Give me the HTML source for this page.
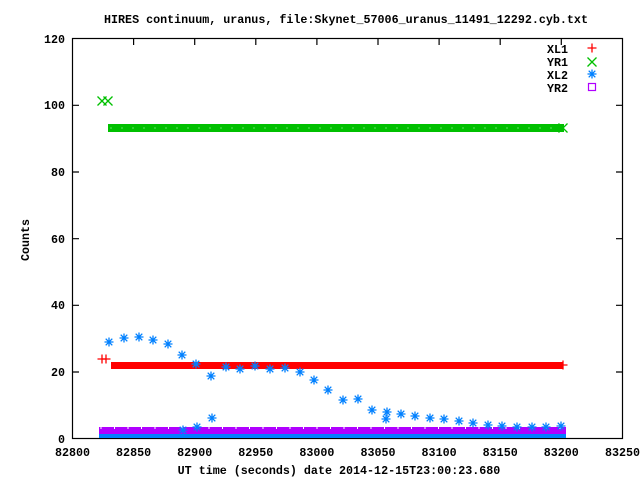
<!DOCTYPE html>
<html><head><meta charset="utf-8"><style>
html,body{margin:0;padding:0;background:#fff;}
svg{display:block;}
text{font-family:"Liberation Mono",monospace;font-weight:bold;font-size:11.7px;fill:#000;}
</style></head><body>
<svg width="640" height="480" viewBox="0 0 640 480" xmlns="http://www.w3.org/2000/svg">
<defs>
<g id="st" stroke="#0080ff" stroke-width="1.3" fill="none">
<path d="M-4.5 0H4.5M0 -4.5V4.5M-3.3 -3.3L3.3 3.3M-3.3 3.3L3.3 -3.3"/>
</g>
<g id="xm" stroke="#00c000" stroke-width="1.3"><path d="M-4.5 -4.5L4.5 4.5M-4.5 4.5L4.5 -4.5"/></g>
<g id="pl" stroke="#ff0000" stroke-width="1.3"><path d="M-4.5 0H4.5M0 -4.5V4.5"/></g>
<pattern id="pp" x="0" y="0" width="13.5" height="8" patternUnits="userSpaceOnUse">
<rect width="13.5" height="8" fill="#b000ff"/><rect x="6" y="2" width="1" height="3" fill="#fff"/>
</pattern>
</defs>
<text x="346" y="23" text-anchor="middle">HIRES continuum, uranus, file:Skynet_57006_uranus_11491_12292.cyb.txt</text>
<!-- frame -->
<rect x="72.5" y="38.5" width="550" height="400" fill="none" stroke="#000" stroke-width="1.2"/>
<g stroke="#000" stroke-width="1.2">
<path d="M72.5 372H79M72.5 305.3H79M72.5 238.7H79M72.5 172H79M72.5 105.3H79M622.5 372H616M622.5 305.3H616M622.5 238.7H616M622.5 172H616M622.5 105.3H616"/>
<path d="M133.6 438V432M194.7 438V432M255.8 438V432M316.9 438V432M378 438V432M439.1 438V432M500.2 438V432M561.3 438V432M133.6 38.5V45M194.7 38.5V45M255.8 38.5V45M316.9 38.5V45M378 38.5V45M439.1 38.5V45M500.2 38.5V45M561.3 38.5V45"/>
</g>
<g text-anchor="end">
<text x="65" y="443">0</text><text x="65" y="376">20</text><text x="65" y="309">40</text><text x="65" y="243">60</text><text x="65" y="176">80</text><text x="65" y="109">100</text><text x="65" y="43">120</text>
</g>
<g text-anchor="middle">
<text x="72.5" y="456">82800</text><text x="133.6" y="456">82850</text><text x="194.7" y="456">82900</text><text x="255.8" y="456">82950</text><text x="316.9" y="456">83000</text><text x="378" y="456">83050</text><text x="439.1" y="456">83100</text><text x="500.2" y="456">83150</text><text x="561.3" y="456">83200</text><text x="622.5" y="456">83250</text>
<text x="339" y="474">UT time (seconds) date 2014-12-15T23:00:23.680</text>
</g>
<text transform="translate(29 240) rotate(-90)" text-anchor="middle">Counts</text>
<!-- legend -->
<g text-anchor="end"><text x="568" y="53">XL1</text><text x="568" y="66">YR1</text><text x="568" y="79">XL2</text><text x="568" y="92">YR2</text></g>
<use href="#pl" x="592" y="48"/><use href="#xm" x="592" y="62"/><use href="#st" x="592" y="74"/>
<rect x="588.5" y="83.5" width="7" height="7" fill="none" stroke="#b000ff" stroke-width="1.2"/>
<!-- green -->
<use href="#xm" x="102" y="101"/><use href="#xm" x="108" y="101"/>
<rect x="108" y="124" width="456" height="8" fill="#00c000"/>
<path d="M110 128H560" stroke="#60e060" stroke-width="1" stroke-dasharray="2 9"/>
<use href="#xm" x="563" y="128"/>
<!-- red -->
<use href="#pl" x="102" y="359"/><use href="#pl" x="106" y="359"/>
<rect x="111" y="362" width="452" height="7" fill="#ff0000"/>
<use href="#pl" x="563" y="365"/>
<!-- blue band and purple -->
<rect x="99" y="433" width="467" height="5" fill="#0080ff"/>
<rect x="99" y="427" width="467" height="7" fill="url(#pp)"/>
<!-- blue stars -->
<g>
<use href="#st" x="109" y="342"/><use href="#st" x="124" y="338"/><use href="#st" x="139" y="337"/><use href="#st" x="153" y="340"/><use href="#st" x="168" y="344"/><use href="#st" x="182" y="355"/><use href="#st" x="196" y="364"/><use href="#st" x="211" y="376"/><use href="#st" x="226" y="367"/><use href="#st" x="240" y="369"/><use href="#st" x="255" y="366"/><use href="#st" x="270" y="369"/>
<use href="#st" x="285" y="368"/><use href="#st" x="300" y="372"/><use href="#st" x="314" y="380"/><use href="#st" x="328" y="390"/><use href="#st" x="343" y="400"/><use href="#st" x="358" y="399"/><use href="#st" x="372" y="410"/><use href="#st" x="387" y="412"/><use href="#st" x="401" y="414"/><use href="#st" x="415" y="416"/><use href="#st" x="430" y="418"/><use href="#st" x="444" y="419"/><use href="#st" x="459" y="421"/><use href="#st" x="473" y="423"/><use href="#st" x="488" y="425"/><use href="#st" x="502" y="426"/><use href="#st" x="517" y="427"/><use href="#st" x="532" y="427"/><use href="#st" x="546" y="427"/><use href="#st" x="561" y="426"/>
<use href="#st" x="212" y="418"/><use href="#st" x="197" y="427"/><use href="#st" x="183" y="430"/><use href="#st" x="386" y="419"/>
</g>
</svg>
</body></html>
